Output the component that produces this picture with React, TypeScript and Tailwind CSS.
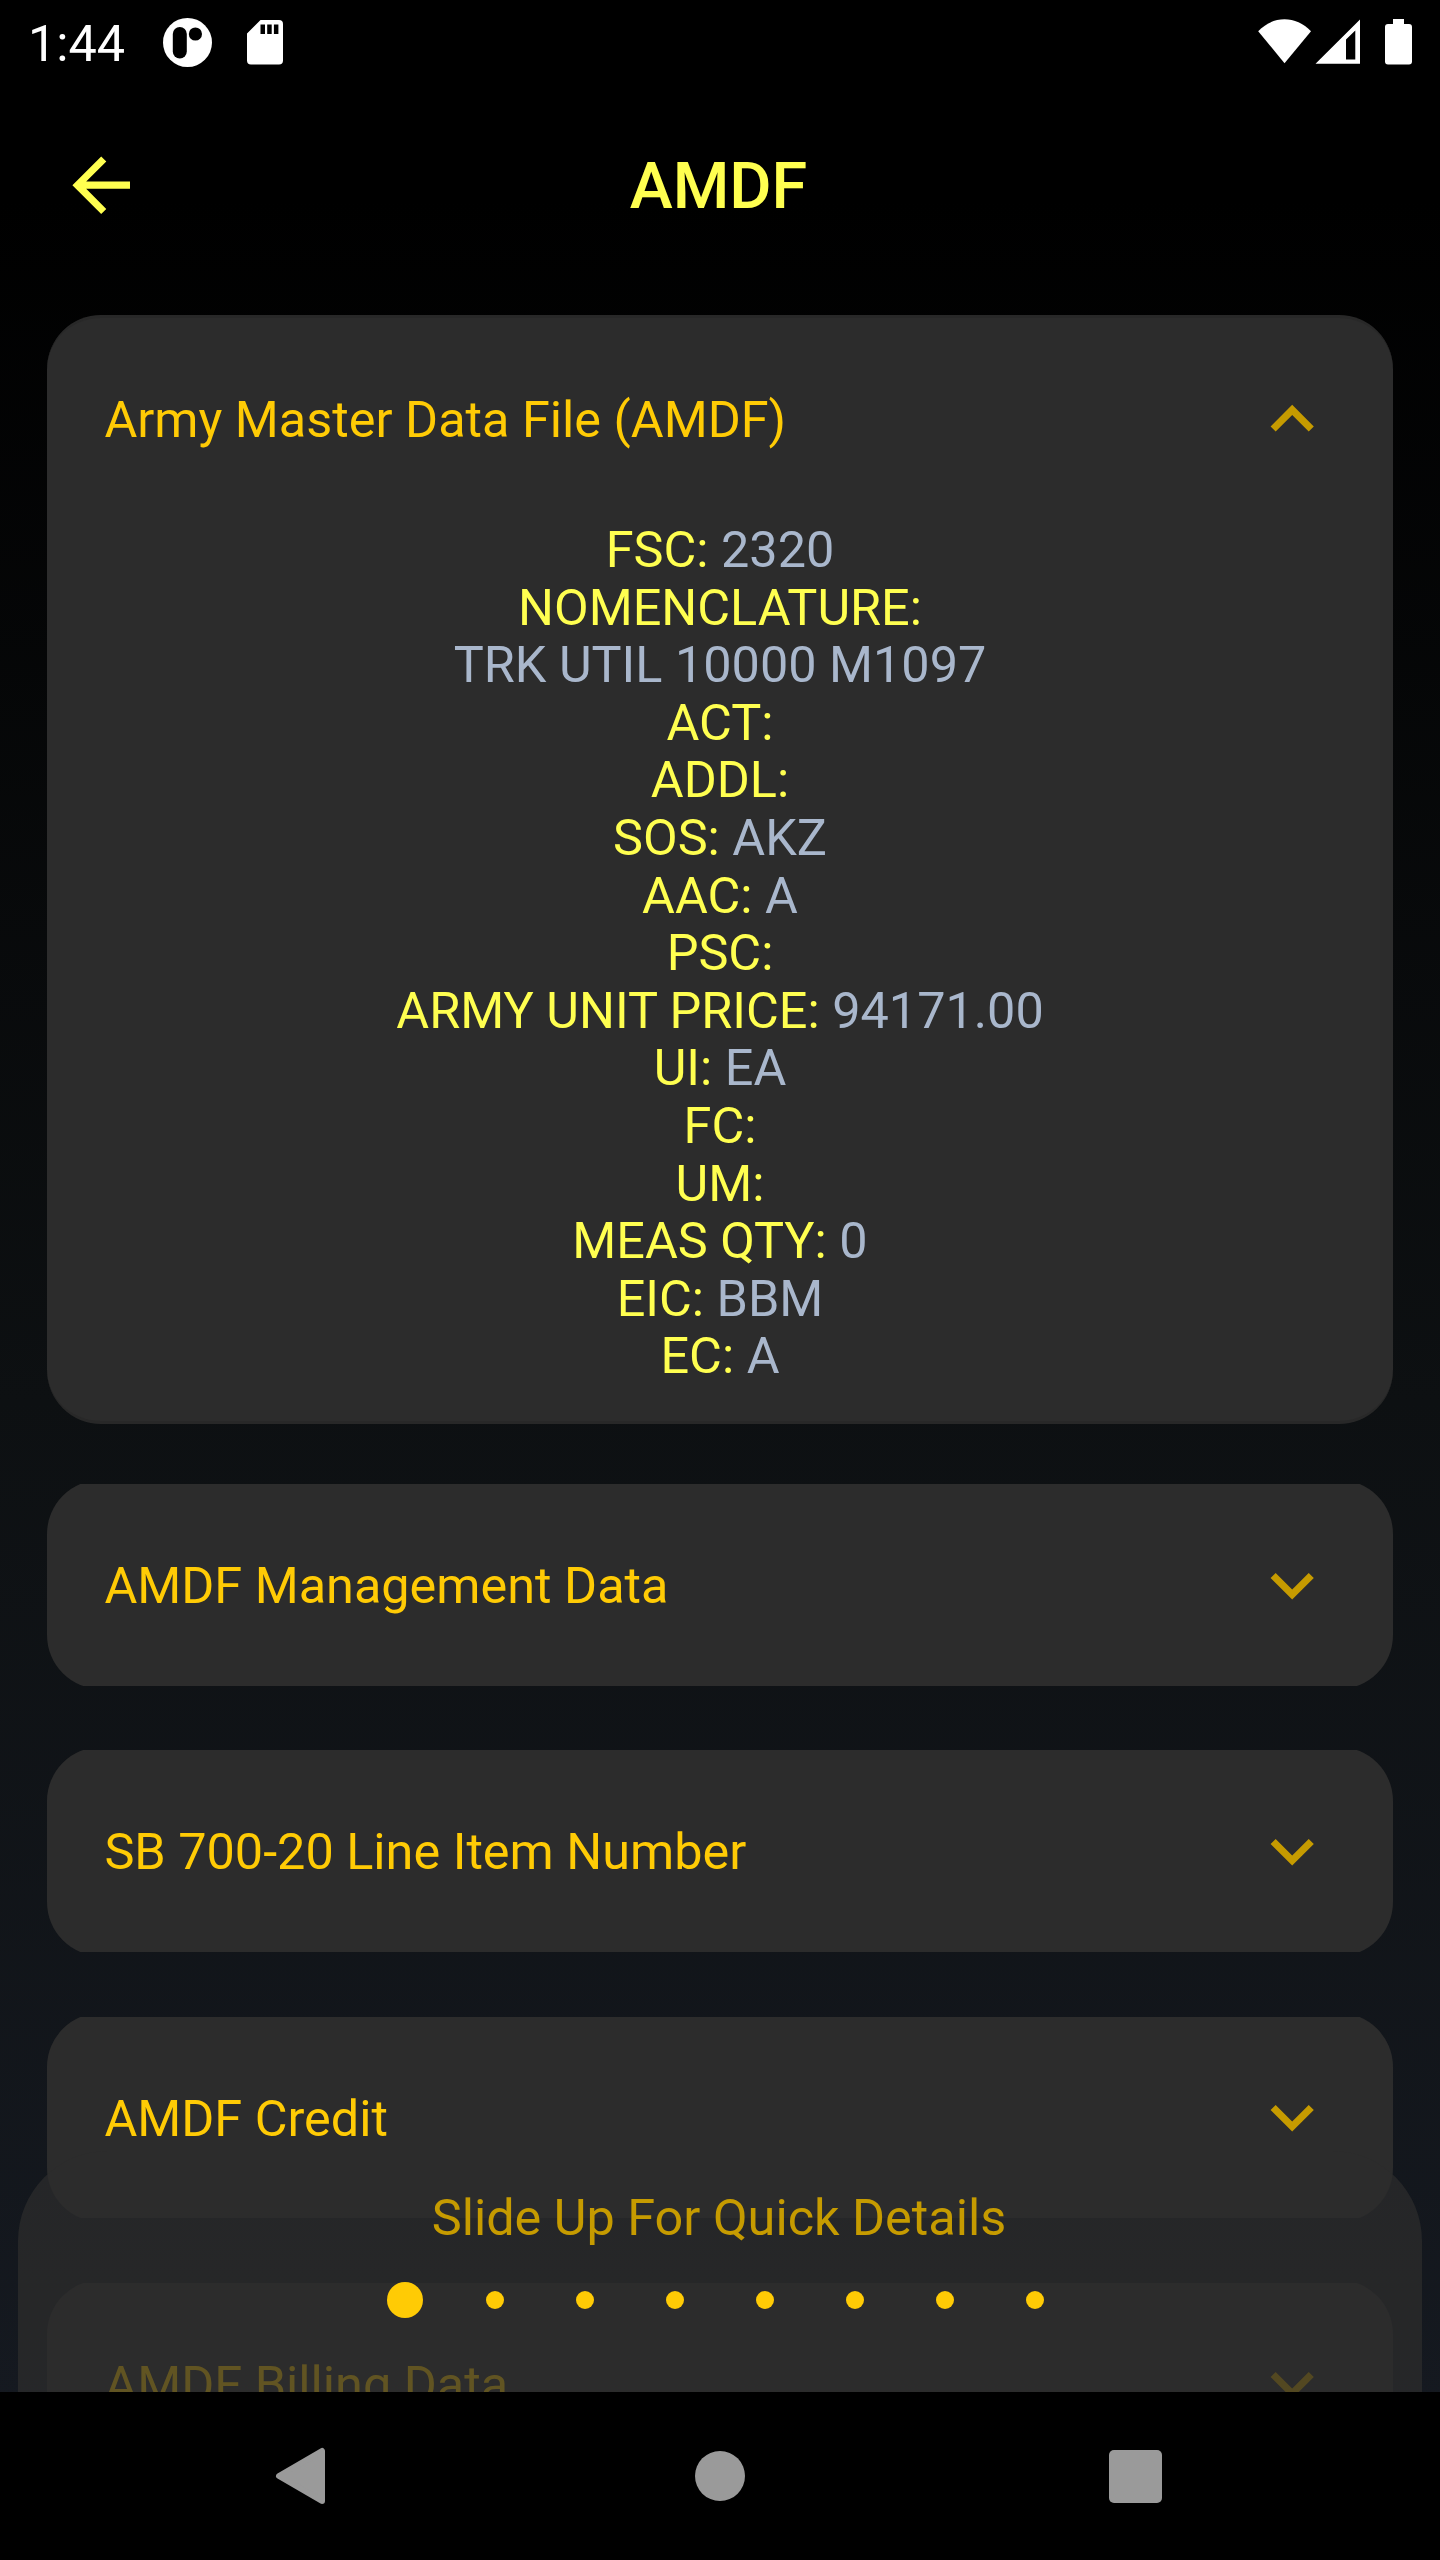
import type { ReactNode } from "react";

const details: [string, string][] = [
  ["FSC:", "2320"],
  ["NOMENCLATURE:", ""],
  ["", "TRK UTIL 10000 M1097"],
  ["ACT:", ""],
  ["ADDL:", ""],
  ["SOS:", "AKZ"],
  ["AAC:", "A"],
  ["PSC:", ""],
  ["ARMY UNIT PRICE:", "94171.00"],
  ["UI:", "EA"],
  ["FC:", ""],
  ["UM:", ""],
  ["MEAS QTY:", "0"],
  ["EIC:", "BBM"],
  ["EC:", "A"],
];

const sections = ["AMDF Management Data", "SB 700-20 Line Item Number", "AMDF Credit", "AMDF Billing Data"];

function StatusBar() {
  return (
    <div className="flex h-[86px] shrink-0 items-start justify-between">
      <div className="flex pl-[28px]">
        <span className="mt-[15px] w-[135px] text-[50.4px] leading-[57px] text-white">1:44</span>
        <svg className="mt-[17.5px] mr-[34.5px] h-[49px] w-[49px]" viewBox="0 0 49 49">
          <circle cx="24.5" cy="24.5" r="24.5" fill="#fff" />
          <rect x="9.8" y="9" width="14" height="31.5" rx="7" fill="#000" />
          <circle cx="32.4" cy="16" r="6.6" fill="#000" />
        </svg>
        <svg className="mt-[20px] h-[45px] w-[36px]" viewBox="0 0 36 45">
          <path
            fillRule="evenodd"
            fill="#fff"
            d="M13.5 0H32a4 4 0 0 1 4 4v36.5a4 4 0 0 1-4 4H4a4 4 0 0 1-4-4V13.5zM13.5 4.5v9.500H18V4.500zM20.200 4.500v9.500h4.500V4.500zM26.900 4.500v9.500h4.500V4.500z"
          />
        </svg>
      </div>
      <div className="flex pt-[19px] pr-[28px]">
        <svg className="h-[46px] w-[154px]" viewBox="1258 19 154 46" fill="#fff">
          <path d="M1258.200 31.300C1273 15.300 1296 15.300 1311 31.300L1284.500 63.200Z" />
          <path fillRule="evenodd" d="M1315.500 63.700H1360V19.500ZM1346 39.500V59.500H1355.300V30.500Z" />
          <path d="M1393 19h11v5h5a3 3 0 0 1 3 3v34.500a3 3 0 0 1-3 3h-21a3 3 0 0 1-3-3V27a3 3 0 0 1 3-3h5z" />
        </svg>
      </div>
    </div>
  );
}

function Chevron({ up = false }: { up?: boolean }) {
  return (
    <svg className="h-[86.4px] w-[86.4px]" viewBox="0 0 24 24" fill="#c69b00">
      {up ? (
        <path d="M12 8l-6 6 1.410 1.410L12 10.830l4.590 4.580L18 14z" />
      ) : (
        <path d="M16.590 8.590L12 13.170 7.410 8.590 6 10l6 6 6-6z" />
      )}
    </svg>
  );
}

function Header({ children, up }: { children: ReactNode; up?: boolean }) {
  return (
    <div className="flex items-center justify-between pr-[57.6px] pl-[57.6px]">
      <h2 className="pt-[2px] text-[50.4px] leading-[58px] whitespace-nowrap text-[#ffcb05]">{children}</h2>
      <Chevron up={up} />
    </div>
  );
}

export default function App() {
  return (
    <div className="relative flex h-[2560px] w-[1440px] flex-col overflow-hidden bg-[linear-gradient(to_bottom,#000_200px,#0d1012_1400px,#151920_2400px)] font-['Roboto',sans-serif]">
      <StatusBar />

      <header className="grid h-[228.5px] shrink-0 grid-cols-3 items-start pt-[55.6px]">
        <svg className="ml-[57.6px] h-[86.4px] w-[86.4px]" viewBox="0 0 24 24" fill="#ffff50">
          <path d="M20 11H7.830l5.590-5.590L12 4l-8 8 8 8 1.410-1.410L7.830 13H20v-2z" />
        </svg>
        <h1 className="mt-[6px] pr-[3px] text-center text-[64.8px] leading-[76px] font-medium text-[#ffff50]">AMDF</h1>
      </header>

      <main className="flex min-h-0 flex-1 flex-col overflow-hidden px-[46.8px]">
        <section className="h-[1109px] shrink-0 rounded-[54px] border-y-[3px] border-[#282828] bg-[#2c2c2c] pt-[58.7px]">
          <Header up>Army Master Data File (AMDF)</Header>
          <dl className="pt-[58.4px] text-center text-[50.4px]">
            {details.map(([label, value]) => (
              <div key={label + value} className="h-[57.6px] leading-[57.6px] whitespace-pre">
                <dt className="inline text-[#ffff50]">{label}</dt>
                {label && value ? " " : ""}
                <dd className="inline text-[#a9b7cc]">{value}</dd>
              </div>
            ))}
          </dl>
        </section>

        {sections.map((title) => (
          <section key={title} className="mt-[64.8px] h-[201.6px] shrink-0 overflow-hidden nth-2:mt-[60.5px]">
            <div className="-mt-[3.6px] flex h-[208.8px] flex-col justify-center rounded-[54px] bg-[#2c2c2c]">
              <Header>{title}</Header>
            </div>
          </section>
        ))}
      </main>

      <div className="absolute inset-x-[18px] top-[2151px] h-[241px] rounded-t-[90px] bg-[#2c2c2c]/75 pt-[38.4px]">
        <p className="pr-[2px] text-center text-[50.4px] leading-[58px] text-[#c69b00]">Slide Up For Quick Details</p>
        <div className="mt-[34.9px] flex h-[36px] items-center gap-[72px] pl-[369px]">
          <span className="-mr-[9px] h-[36px] w-[36px] rounded-full bg-[#ffcb05]" />
          {[1, 2, 3, 4, 5, 6, 7].map((page) => (
            <span key={page} className="h-[18px] w-[18px] rounded-full bg-[#ffcb05]" />
          ))}
        </div>
      </div>

      <nav className="relative flex h-[168px] shrink-0 items-center bg-black">
        <svg className="ml-[275px] h-[58px] w-[51px]" viewBox="0 0 51 58">
          <path d="M4 29L47 4V54Z" fill="#9a9a9a" stroke="#9a9a9a" strokeWidth="6" strokeLinejoin="round" />
        </svg>
        <span className="ml-[369px] h-[50px] w-[50px] rounded-full bg-[#9a9a9a]" />
        <span className="ml-[363.5px] h-[53px] w-[53px] rounded-[5px] bg-[#9a9a9a]" />
      </nav>
    </div>
  );
}
